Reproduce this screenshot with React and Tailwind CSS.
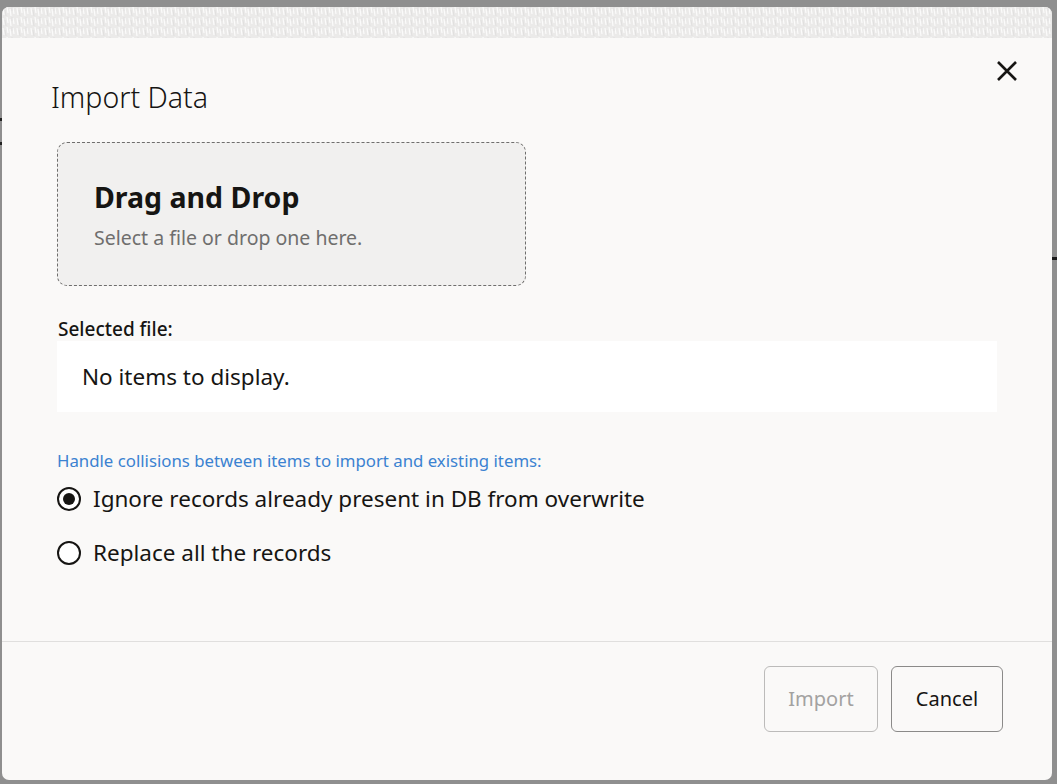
import React from "react";

function Texture() {
  return (
    <svg className="absolute inset-0 h-full w-full" preserveAspectRatio="none">
      <defs>
        <pattern id="tx" width="14" height="10" patternUnits="userSpaceOnUse">
          <path d="M1 1 L2 8 M5 0 L6 6 M8 2 L9 9 M11 1 L12 7" stroke="#ffffff" strokeWidth="1.2" strokeOpacity="0.8" />
          <path d="M3 3 L4 9 M10 0 L10 4" stroke="#dcdbda" strokeWidth="1" strokeOpacity="0.7" />
        </pattern>
      </defs>
      <rect width="100%" height="100%" fill="url(#tx)" />
    </svg>
  );
}

function Radio({ checked, label }) {
  return (
    <label className="flex h-[30px] items-center gap-[12px]">
      <span className="flex h-[24px] w-[24px] items-center justify-center rounded-full border-[2px] border-[#161513] bg-white">
        {checked && <span className="h-[12px] w-[12px] rounded-full bg-[#161513]" />}
      </span>
      <span className="text-[22.5px] leading-[30px] text-[#161513]">{label}</span>
    </label>
  );
}

export default function App() {
  return (
    <div
      className="relative flex h-[784px] w-[1057px] flex-col bg-[#8f8f8f] pt-[7px] pl-[2px] pr-[5px] pb-[4px]"
      style={{ fontFamily: '"Noto Sans", "Open Sans", sans-serif' }}
    >
      <div className="absolute left-0 top-[118px] h-[3px] w-[3px] bg-[#222]" />
      <div className="absolute left-0 top-[142px] h-[3px] w-[3px] bg-[#222]" />
      <div className="absolute right-0 top-[257px] h-[3px] w-[5px] bg-[#1a1a1a]" />
      <div className="relative flex flex-1 flex-col overflow-hidden rounded-[7px] bg-[#faf9f8]">
        <div className="relative h-[31px] shrink-0 bg-[#ebeae9]">
          <Texture />
        </div>
        <div className="flex flex-1 flex-col px-[55px]">
          <div className="flex items-start justify-between">
            <h1 className="-ml-[6px] mt-[41px] text-[28.5px] font-light leading-[36px] text-[#161513]">Import Data</h1>
            <button className="-mr-[22px] mt-[21px] flex h-[24px] w-[24px] items-center justify-center">
              <svg width="22" height="22" viewBox="0 0 22 22">
                <path d="M2 2 L20 20 M20 2 L2 20" stroke="#161513" strokeWidth="2.6" />
              </svg>
            </button>
          </div>
          <div className="mt-[27px] flex h-[144px] w-[469px] flex-col rounded-[10px] border border-dashed border-[#6f6e6d] bg-[#f1f0ef] pl-[36px] pt-[37px]">
            <div className="text-[28.5px] font-bold leading-[34px] text-[#161513]">Drag and Drop</div>
            <div className="mt-[11px] text-[19.5px] leading-[26px] text-[#6f6e6d]">Select a file or drop one here.</div>
          </div>
          <div className="ml-[1px] mt-[31px] text-[19px] font-medium leading-[24px] text-[#161513]">Selected file:</div>
          <div className="flex h-[71px] w-[940px] items-center bg-white pl-[25px] text-[22.5px] text-[#161513]">
            No items to display.
          </div>
          <div className="mt-[38px] text-[16.8px] leading-[22px] text-[#3b82d1]">
            Handle collisions between items to import and existing items:
          </div>
          <div className="mt-[12px] flex flex-col gap-[24px]">
            <Radio checked label="Ignore records already present in DB from overwrite" />
            <Radio label="Replace all the records" />
          </div>
        </div>
        <div className="flex h-[139px] shrink-0 items-start justify-end gap-[13px] border-t border-[#e0dfde] pr-[49px] pt-[24px]">
          <button className="h-[66px] w-[114px] rounded-[6px] border border-[#bcbbba] text-[20px] text-[#a3a2a1]">
            Import
          </button>
          <button className="h-[66px] w-[112px] rounded-[6px] border border-[#8b8a89] text-[20px] text-[#161513]">
            Cancel
          </button>
        </div>
      </div>
    </div>
  );
}
